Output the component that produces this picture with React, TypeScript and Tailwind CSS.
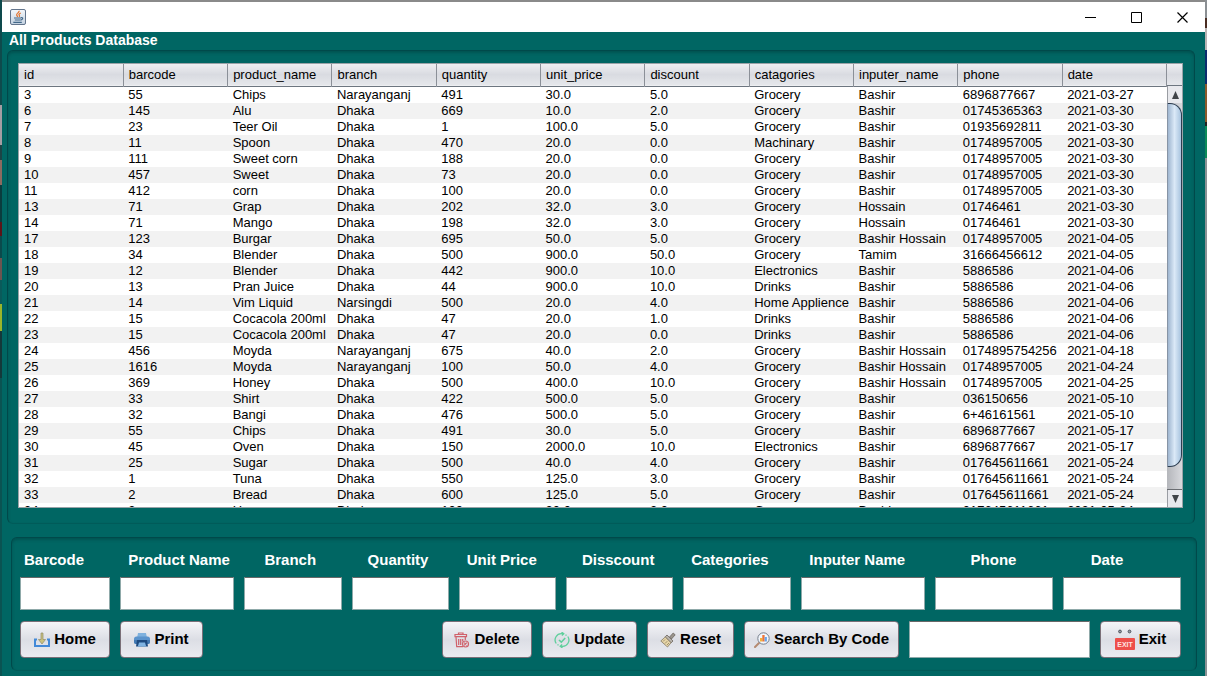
import React from "react";

const columns = ["id", "barcode", "product_name", "branch", "quantity", "unit_price", "discount", "catagories", "inputer_name", "phone", "date"];

const data = `3|55|Chips|Narayanganj|491|30.0|5.0|Grocery|Bashir|6896877667|2021-03-27
6|145|Alu|Dhaka|669|10.0|2.0|Grocery|Bashir|01745365363|2021-03-30
7|23|Teer Oil|Dhaka|1|100.0|5.0|Grocery|Bashir|01935692811|2021-03-30
8|11|Spoon|Dhaka|470|20.0|0.0|Machinary|Bashir|01748957005|2021-03-30
9|111|Sweet corn|Dhaka|188|20.0|0.0|Grocery|Bashir|01748957005|2021-03-30
10|457|Sweet|Dhaka|73|20.0|0.0|Grocery|Bashir|01748957005|2021-03-30
11|412|corn|Dhaka|100|20.0|0.0|Grocery|Bashir|01748957005|2021-03-30
13|71|Grap|Dhaka|202|32.0|3.0|Grocery|Hossain|01746461|2021-03-30
14|71|Mango|Dhaka|198|32.0|3.0|Grocery|Hossain|01746461|2021-03-30
17|123|Burgar|Dhaka|695|50.0|5.0|Grocery|Bashir Hossain|01748957005|2021-04-05
18|34|Blender|Dhaka|500|900.0|50.0|Grocery|Tamim|31666456612|2021-04-05
19|12|Blender|Dhaka|442|900.0|10.0|Electronics|Bashir|5886586|2021-04-06
20|13|Pran Juice|Dhaka|44|900.0|10.0|Drinks|Bashir|5886586|2021-04-06
21|14|Vim Liquid|Narsingdi|500|20.0|4.0|Home Applience|Bashir|5886586|2021-04-06
22|15|Cocacola 200ml|Dhaka|47|20.0|1.0|Drinks|Bashir|5886586|2021-04-06
23|15|Cocacola 200ml|Dhaka|47|20.0|0.0|Drinks|Bashir|5886586|2021-04-06
24|456|Moyda|Narayanganj|675|40.0|2.0|Grocery|Bashir Hossain|0174895754256|2021-04-18
25|1616|Moyda|Narayanganj|100|50.0|4.0|Grocery|Bashir Hossain|01748957005|2021-04-24
26|369|Honey|Dhaka|500|400.0|10.0|Grocery|Bashir Hossain|01748957005|2021-04-25
27|33|Shirt|Dhaka|422|500.0|5.0|Grocery|Bashir|036150656|2021-05-10
28|32|Bangi|Dhaka|476|500.0|5.0|Grocery|Bashir|6+46161561|2021-05-10
29|55|Chips|Dhaka|491|30.0|5.0|Grocery|Bashir|6896877667|2021-05-17
30|45|Oven|Dhaka|150|2000.0|10.0|Electronics|Bashir|6896877667|2021-05-17
31|25|Sugar|Dhaka|500|40.0|4.0|Grocery|Bashir|017645611661|2021-05-24
32|1|Tuna|Dhaka|550|125.0|3.0|Grocery|Bashir|017645611661|2021-05-24
33|2|Bread|Dhaka|600|125.0|5.0|Grocery|Bashir|017645611661|2021-05-24
34|3|Honey|Dhaka|100|20.0|2.0|Grocery|Bashir|017645611661|2021-05-24`;

const rows = data.split("\n").map((line) => line.split("|"));

const fields = [
  { label: "Barcode", pad: "pl-1" },
  { label: "Product Name", pad: "pl-2" },
  { label: "Branch", pad: "pl-5" },
  { label: "Quantity", pad: "pl-4" },
  { label: "Unit Price", pad: "pl-2" },
  { label: "Disscount", pad: "pl-4" },
  { label: "Categories", pad: "pl-2" },
  { label: "Inputer Name", pad: "pl-2" },
  { label: "Phone", pad: "pl-9" },
  { label: "Date", pad: "pl-7" },
];

const HomeIcon = () => (
  <svg width="16" height="16" viewBox="0 0 16 16" aria-hidden="true">
    <path d="M3 7.500H1V14h14V7.500h-2" fill="none" stroke="#4389d8" strokeWidth="2" />
    <path d="M7 1h2v6.500h2.500L8 12 4.500 7.500H7z" fill="#cbc27e" stroke="#8f8d68" strokeWidth=".7" />
  </svg>
);

const PrintIcon = () => (
  <svg width="16" height="16" viewBox="0 0 16 16" aria-hidden="true">
    <path d="M4 1h8l1 5H3z" fill="#7fb1de" />
    <rect x="0" y="4.500" width="16" height="7.500" rx="2.500" fill="#5b93cc" />
    <path d="M0 8h16v2a2 2 0 0 1-2 2H2a2 2 0 0 1-2-2z" fill="#4379b3" />
    <path d="M3 8h10l1 6.500H2z" fill="#1d4a80" />
    <path d="M5 10.500h6l1.200 4H3.800z" fill="#7fb3e2" />
  </svg>
);

const DeleteIcon = () => (
  <svg width="16" height="16" viewBox="0 0 16 16" aria-hidden="true" fill="none" stroke="#d0616b" strokeWidth="1.200">
    <path d="M1 2.500h11.500v2.200H1zM4.500 2.500V1h4.500v1.500M2 5l.7 9.700h6.500M11.300 5v3M4.700 7v6M6.700 7v6M8.700 7v2.500" />
    <circle cx="11.500" cy="12" r="3" />
    <path d="M10.200 10.700l2.600 2.600M12.800 10.700l-2.600 2.600" />
  </svg>
);

const UpdateIcon = () => (
  <svg width="16" height="16" viewBox="0 0 16 16" aria-hidden="true" fill="none" stroke="#5fcf9c" strokeWidth="1.300">
    <path d="M2.200 11.500A6.300 6.300 0 0 1 8 1.700h1.500M13.800 4.500A6.300 6.300 0 0 1 8 14.300H6.500M7.500 0l2.300 1.700-2 1.700M8.500 16l-2.300-1.700 2-1.700" />
    <path d="M11.500 2.700l1 .8M4.500 13.300l-1-.8" />
    <path d="M5 8l2.300 2.200L11.200 6" strokeWidth="1.600" />
  </svg>
);

const ResetIcon = () => (
  <svg width="16" height="16" viewBox="0 0 16 16" aria-hidden="true">
    <path d="M9.500 5l3.700-4 2 1.800L11.500 7z" fill="#9a948c" stroke="#625c56" strokeWidth=".7" />
    <path d="M7 3l6 6-1.800 1.800-6-6z" fill="#b9b4ac" stroke="#6c655e" strokeWidth=".8" />
    <path d="M5.200 5L11 10.800 7.500 15 .8 9z" fill="#e6d5a8" stroke="#857a66" strokeWidth=".8" />
    <path d="M3 9.500l2-2M5 11.500l2.300-2.300M7 13l2-2" stroke="#8d7d5b" strokeWidth=".8" />
  </svg>
);

const SearchIcon = () => (
  <svg width="16" height="16" viewBox="0 0 16 16" aria-hidden="true">
    <path d="M5 11l-4 4" stroke="#b58a70" strokeWidth="2" strokeLinecap="round" />
    <circle cx="9.500" cy="6.500" r="5.700" fill="#f2f6fc" stroke="#757e8c" strokeWidth="1" />
    <path d="M6 9.500V6h2.300v3.500z" fill="#f2b23c" />
    <path d="M8.300 9.500V3h2.300v6.500z" fill="#ee7436" />
    <path d="M10.600 9.500V5h2.300v4.500z" fill="#6aa5ea" />
  </svg>
);

const ExitIcon = () => (
  <svg width="20" height="22" viewBox="0 0 20 22" aria-hidden="true">
    <circle cx="5" cy="2.500" r="1.400" fill="#9aa0a8" stroke="#50555e" strokeWidth="1" />
    <circle cx="14.500" cy="2.500" r="1.400" fill="#9aa0a8" stroke="#50555e" strokeWidth="1" />
    <rect x="0" y="9" width="20" height="12" rx="1" fill="#ee4f4a" />
    <text x="10" y="17.500" textAnchor="middle" fontFamily="Liberation Sans, sans-serif" fontWeight="700" fontSize="7" fill="#ffe3e0">EXIT</text>
  </svg>
);

const JavaIcon = () => (
  <svg width="16" height="16" viewBox="0 0 16 16" aria-hidden="true">
    <defs>
      <linearGradient id="java-tile" x1="0" y1="0" x2="0" y2="1">
        <stop offset="0" stopColor="#f4f7fa" />
        <stop offset="1" stopColor="#c3d1e0" />
      </linearGradient>
    </defs>
    <rect x=".5" y=".5" width="15" height="15" rx="1.500" fill="url(#java-tile)" stroke="#63758c" />
    <path d="M9 1.800c1 1.700-3 2.400-2.300 4.200.2.800 1 1.100.8 2M10.800 4c-1.800.7-2.300 1.500-1.500 2.300.5.600.2 1.200-.3 1.600" fill="none" stroke="#e2702a" strokeWidth="1.200" />
    <path d="M4 9h7M4.800 11h5.700M3.300 13.300h8.500M11 8.700c2.300-.4 2.300 1.900-.3 2.400" fill="none" stroke="#43698a" strokeWidth="1.200" />
  </svg>
);

function ActionButton({ label, icon, width, className = "" }: { label: string; icon: React.ReactNode; width: string; className?: string }) {
  return (
    <button
      type="button"
      className={`flex h-[37px] shrink-0 items-center justify-center gap-1 whitespace-nowrap rounded-[4px] border border-[#7a6f78] bg-gradient-to-b from-[#f5f5f8] via-[#dcdee5] to-[#eaebf0] text-[15px] font-bold text-black ${width} ${className}`}
    >
      {icon}
      {label}
    </button>
  );
}

const inputStyle = "w-full min-w-0 border border-[#8fa9a9] border-t-[#686868] bg-white px-1 text-sm text-black outline-none";
const panelStyle = "rounded-[6px] border border-[#00494a] border-b-[#005b59] shadow-[inset_0_2px_3px_rgba(0,50,50,0.35)]";
const barStyle = "bg-gradient-to-b from-[#eeeff2] via-[#d9dbe1] to-[#e5e7eb]";

export default function App() {
  return (
    <div className="flex min-h-screen font-['Liberation_Sans',Arial,sans-serif]">
      <div className="w-[2px] bg-[linear-gradient(to_bottom,#0e4a4c_0_105px,#a49da3_105px_145px,#1c4446_145px_160px,#8d6a60_160px_185px,#0a3c3e_185px_222px,#5c1418_222px_236px,#0a4a4c_236px_258px,#6d5450_258px_280px,#0a5a5a_280px_304px,#9bb52a_304px_331px,#14383a_331px_378px,#0a5352_378px)]" />
      <div className="flex min-w-0 flex-1 flex-col bg-[#006663]">
        <header className="flex h-8 items-center justify-between border-t-2 border-[#8a8a8a] bg-white pl-2">
          <JavaIcon />
          <div className="flex h-full">
            <button type="button" aria-label="Minimize" className="flex w-[46px] items-center justify-center">
              <svg width="11" height="11" viewBox="0 0 11 11"><path d="M0 5.500h11" stroke="#000" /></svg>
            </button>
            <button type="button" aria-label="Maximize" className="flex w-[46px] items-center justify-center">
              <svg width="11" height="11" viewBox="0 0 11 11"><path d="M.5.5h10v10H.5z" fill="none" stroke="#000" /></svg>
            </button>
            <button type="button" aria-label="Close" className="flex w-[46px] items-center justify-center">
              <svg width="11" height="11" viewBox="0 0 11 11"><path d="M.5.5l10 10M10.500.5l-10 10" stroke="#000" strokeWidth="1.200" /></svg>
            </button>
          </div>
        </header>

        <h1 className="px-[7px] pb-[2px] text-sm leading-4 font-bold text-white">All Products Database</h1>

        <section className={`mr-[10px] ml-[5px] pt-3 pr-[11px] pb-[15px] pl-[10px] ${panelStyle}`}>
          <div className="flex h-[445px] overflow-hidden border border-[#9aa3a8] bg-white text-[13px] text-black">
            <div className="min-w-0 flex-1 overflow-hidden">
              <table className="w-full table-fixed border-collapse">
                <thead>
                  <tr className={`h-[22px] border-b border-[#6d7680] ${barStyle}`}>
                    {columns.map((name) => (
                      <th key={name} className="border-r border-[#8b9098] p-0 pl-[5px] text-left leading-4 font-normal">{name}</th>
                    ))}
                  </tr>
                </thead>
                <tbody>
                  {rows.map((row) => (
                    <tr key={row[0]} className="h-4 even:bg-[#f2f2f2]">
                      {row.map((cell, i) => (
                        <td key={columns[i]} className="p-0 pl-[5px] leading-4 whitespace-nowrap">{cell}</td>
                      ))}
                    </tr>
                  ))}
                </tbody>
              </table>
            </div>
            <div className="flex w-[15px] flex-col">
              <div className={`h-[22px] border-b border-[#6d7680] ${barStyle}`} />
              <button type="button" aria-label="Scroll up" className="flex h-[17px] items-center justify-center border-l border-[#9a9da3] bg-[#e8e9ed]">
                <svg width="7" height="8" viewBox="0 0 7 8"><path d="M3.500 0L7 8H0z" fill="#404448" /></svg>
              </button>
              <div className="flex-1 border-b border-[#6a6d72] bg-gradient-to-r from-[#b4b6bb] to-[#d8d9dd] pb-[22px]">
                <div className="h-full rounded-r-[12px] border border-[#2c3d50] border-l-[#8794a5] bg-gradient-to-r from-[#9fb6d0] via-[#dbe9f7] to-[#a8c4df]" />
              </div>
              <button type="button" aria-label="Scroll down" className="flex h-[17px] items-center justify-center border-l border-[#9a9da3] bg-[#e8e9ed]">
                <svg width="7" height="8" viewBox="0 0 7 8"><path d="M3.500 8L7 0H0z" fill="#404448" /></svg>
              </button>
            </div>
          </div>
        </section>

        <section className={`mt-[13px] mr-2 ml-[9px] pt-[13px] pr-[15px] pb-3 pl-2 ${panelStyle}`}>
          <div className="grid grid-cols-[90fr_114fr_97fr_97fr_97fr_107fr_108fr_123fr_118fr_118fr] gap-[10px]">
            {fields.map(({ label, pad }) => (
              <label key={label} className="flex min-w-0 flex-col gap-2 text-[15px] leading-[18px] font-bold whitespace-nowrap text-white">
                <span className={pad}>{label}</span>
                <input type="text" className={`h-[33px] ${inputStyle}`} />
              </label>
            ))}
          </div>
          <div className="mt-[11px] flex gap-[10px]">
            <ActionButton label="Home" icon={<HomeIcon />} width="w-[90px]" />
            <ActionButton label="Print" icon={<PrintIcon />} width="w-[83px]" />
            <ActionButton label="Delete" icon={<DeleteIcon />} width="w-[90px]" className="ml-auto" />
            <ActionButton label="Update" icon={<UpdateIcon />} width="w-[95px]" />
            <ActionButton label="Reset" icon={<ResetIcon />} width="w-[87px]" />
            <ActionButton label="Search By Code" icon={<SearchIcon />} width="w-[155px]" />
            <div className="flex w-[181px]">
              <input type="text" aria-label="Product code" className={`h-[37px] ${inputStyle}`} />
            </div>
            <ActionButton label="Exit" icon={<ExitIcon />} width="w-[81px]" />
          </div>
        </section>
      </div>
      <div className="w-[2px] bg-[linear-gradient(to_bottom,#8b8f93_0_18px,#4a2c22_18px_28px,#b9b4b4_28px_50px,#0d2c6e_50px_84px,#8a5a2c_84px_122px,#222_122px_126px,#0c8a58_126px_158px,#8b9295_158px)]" />
    </div>
  );
}
